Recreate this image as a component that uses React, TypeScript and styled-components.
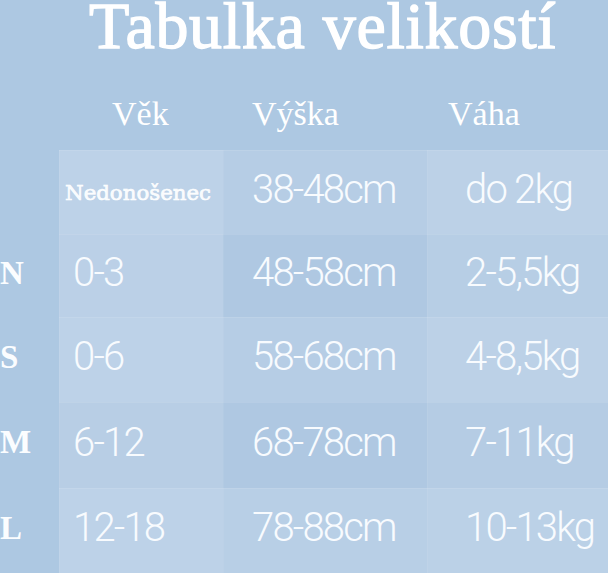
import React from "react";
import styled, { createGlobalStyle } from "styled-components";

const GlobalStyle = createGlobalStyle`
  html, body { margin: 0; padding: 0; }
  body { background: #adc8e2; }
`;

const Page = styled.div`
  width: 608px;
  height: 573px;
  overflow: hidden;
  background: #adc8e2;
  color: #ffffff;
  display: flex;
  flex-direction: column;
`;

const Title = styled.h1`
  margin: 0;
  font-family: "Liberation Serif", "Times New Roman", serif;
  font-weight: 400;
  font-size: 66px;
  line-height: 52px;
  height: 52px;
  padding-left: 89px;
  white-space: nowrap;
  letter-spacing: 0.7px;
  -webkit-text-stroke: 1.3px #ffffff;
`;

const COLS = "59px 164px 204px 181px";

const HeaderRow = styled.div`
  display: grid;
  grid-template-columns: ${COLS};
  height: 98px;
  box-sizing: border-box;
  padding-top: 45px;
`;

const HeaderCell = styled.div<{ $pad: number }>`
  font-family: "Liberation Serif", "Times New Roman", serif;
  font-size: 34px;
  line-height: 34px;
  padding-left: ${(p) => p.$pad}px;
  white-space: nowrap;
`;

const Table = styled.div`
  display: grid;
  grid-template-columns: ${COLS};
  grid-template-rows: 84px 83px 85px 86px 85px;
`;

const SizeLabel = styled.div`
  display: flex;
  align-items: center;
  padding-bottom: 5px;
  font-family: "Liberation Serif", "Times New Roman", serif;
  font-weight: 700;
  font-size: 33px;
  color: #fbfdff;
`;

const Cell = styled.div<{ $bg: string; $pad: number }>`
  display: flex;
  align-items: center;
  box-sizing: border-box;
  padding-left: ${(p) => p.$pad}px;
  padding-bottom: 5px;
  background: ${(p) => p.$bg};
  box-shadow: inset 0 1px 0 rgba(255, 255, 255, 0.1),
    inset 1px 0 0 rgba(255, 255, 255, 0.06);
  font-family: "Roboto", "Liberation Sans", sans-serif;
  font-weight: 300;
  font-size: 40px;
  line-height: 40px;
  letter-spacing: -1.8px;
  color: #f8fbfe;
  white-space: nowrap;
`;

const SmallSerif = styled.span`
  font-family: "DejaVu Serif", "Liberation Serif", serif;
  font-weight: 400;
  font-size: 21.3px;
  letter-spacing: 0;
  padding-top: 6px;
  -webkit-text-stroke: 0.6px #ffffff;
`;

const LIGHT = "#bdd2e8";
const MID = "#b6cde5";
const DARK = "#afc8e2";

type Row = { label: string; age: React.ReactNode; h: string; w: string; bg: [string, string, string] };

const rows: Row[] = [
  { label: "", age: <SmallSerif>Nedonošenec</SmallSerif>, h: "38-48cm", w: "do 2kg", bg: [LIGHT, MID, "#bcd1e7"] },
  { label: "N", age: "0-3", h: "48-58cm", w: "2-5,5kg", bg: ["#bbd0e7", DARK, "#b7cee5"] },
  { label: "S", age: "0-6", h: "58-68cm", w: "4-8,5kg", bg: [LIGHT, MID, "#bcd1e7"] },
  { label: "M", age: "6-12", h: "68-78cm", w: "7-11kg", bg: ["#b8cee5", DARK, "#b5cce4"] },
  { label: "L", age: "12-18", h: "78-88cm", w: "10-13kg", bg: [LIGHT, "#b8cfe6", "#bbd1e7"] },
];

export default function App() {
  return (
    <>
      <GlobalStyle />
      <Page>
        <Title>Tabulka velikostí</Title>
        <HeaderRow>
          <div />
          <HeaderCell $pad={53}>Věk</HeaderCell>
          <HeaderCell $pad={29}>Výška</HeaderCell>
          <HeaderCell $pad={21}>Váha</HeaderCell>
        </HeaderRow>
        <Table>
          {rows.map((r, i) => (
            <React.Fragment key={i}>
              <SizeLabel>{r.label}</SizeLabel>
              <Cell $bg={r.bg[0]} $pad={i === 0 ? 6 : 14}>{r.age}</Cell>
              <Cell $bg={r.bg[1]} $pad={29}>{r.h}</Cell>
              <Cell $bg={r.bg[2]} $pad={38}>{r.w}</Cell>
            </React.Fragment>
          ))}
        </Table>
      </Page>
    </>
  );
}
